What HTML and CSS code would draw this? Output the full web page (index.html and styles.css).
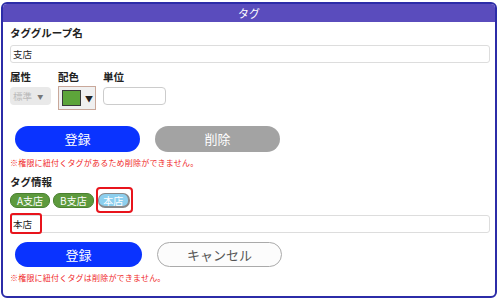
FILE: index.html
```html
<!DOCTYPE html>
<html lang="ja">
<head>
    <meta charset="UTF-8">
    <title>タグ</title>
    <link rel="stylesheet" href="styles.css">
</head>
<body>
    <div class="panel">
        <div class="panel-head">タグ</div>
        <div class="panel-body">
            <div class="label">タググループ名</div>
            <div class="field">支店</div>

            <div class="attr-labels">
                <div class="attr-col attr-kind">属性</div>
                <div class="attr-col attr-color">配色</div>
                <div class="attr-col">単位</div>
            </div>
            <div class="attr-row">
                <div class="select-box">標準 <span class="caret">▼</span></div>
                <div class="color-box">
                    <span class="swatch"></span>
                    <span class="caret dark">▼</span>
                </div>
                <div class="unit-box"></div>
            </div>

            <div class="buttons first">
                <div class="btn btn-blue">登録</div>
                <div class="btn btn-gray">削除</div>
            </div>
            <div class="warn">※権限に紐付くタグがあるため削除ができません。</div>

            <div class="label tag-title">タグ情報</div>
            <div class="tags">
                <span class="tag">A支店</span>
                <span class="tag">B支店</span>
                <span class="tag-mark"><span class="tag tag-active">本店</span></span>
            </div>
            <div class="field-wrap">
                <div class="field">本店</div>
                <span class="text-mark"></span>
            </div>

            <div class="buttons second">
                <div class="btn btn-blue">登録</div>
                <div class="btn btn-white">キャンセル</div>
            </div>
            <div class="warn">※権限に紐付くタグは削除ができません。</div>
        </div>
    </div>
</body>
</html>
```

FILE: styles.css
```css
body {
    margin: 0;
    background-color: #fff;
    font-family: "Noto Sans CJK JP", "Noto Sans", sans-serif;
    color: #222;
}
.panel {
    margin: 2px 0 0 1px;
    width: 496px;
    height: 296px;
    box-sizing: border-box;
    border: 2px solid #2c2ca8;
    border-radius: 6px;
    overflow: hidden;
}
.panel-head {
    height: 18px;
    line-height: 18px;
    background-color: #5a4cbd;
    color: #fff;
    font-size: 11px;
    text-align: center;
}
.panel-body {
    padding: 0 5px 0 7px;
}
.label {
    margin-top: 4px;
    font-size: 10.5px;
    font-weight: bold;
    line-height: 14px;
}
.field {
    margin-top: 5px;
    height: 18px;
    box-sizing: border-box;
    border: 1px solid #ddd;
    border-radius: 3px;
    font-size: 9.5px;
    line-height: 16px;
    padding-left: 2px;
}
.attr-labels {
    display: flex;
    margin-top: 7px;
    font-size: 10.5px;
    font-weight: bold;
    line-height: 14px;
}
.attr-kind {
    width: 48px;
}
.attr-color {
    width: 45px;
}
.attr-row {
    display: flex;
    align-items: flex-start;
    margin-top: 2px;
}
.select-box {
    margin-top: 1px;
    width: 41px;
    height: 18px;
    box-sizing: border-box;
    background-color: #e9e9e9;
    border-radius: 4px;
    color: #bbb;
    font-size: 9.5px;
    line-height: 18px;
    padding-left: 3px;
}
.caret {
    font-size: 6px;
    vertical-align: 1px;
    margin-left: 3px;
    color: #777;
}
.caret.dark {
    color: #222;
    font-size: 8px;
    margin-left: 4px;
}
.color-box {
    margin-left: 7px;
    width: 38px;
    height: 24px;
    box-sizing: border-box;
    border: 1px solid #c9a89a;
    background-color: #f0f0f0;
    display: flex;
    align-items: center;
    padding-left: 3px;
}
.swatch {
    width: 19px;
    height: 16px;
    box-sizing: border-box;
    background-color: #5da53a;
    border: 1px solid #3a3a3a;
}
.unit-box {
    margin-top: 1px;
    margin-left: 7px;
    width: 63px;
    height: 18px;
    box-sizing: border-box;
    border: 1px solid #ccc;
    border-radius: 4px;
}
.buttons {
    display: flex;
    gap: 15px;
    padding-left: 5px;
}
.buttons.first {
    margin-top: 16px;
}
.buttons.second {
    margin-top: 9px;
}
.btn {
    width: 125px;
    height: 26px;
    box-sizing: border-box;
    border-radius: 13px;
    text-align: center;
    font-size: 13px;
    line-height: 26px;
    color: #fff;
}
.buttons.second .btn {
    height: 25px;
    line-height: 25px;
}
.buttons.second .btn-blue {
    width: 127px;
}
.btn-blue {
    background-color: #0a33ff;
}
.btn-gray {
    background-color: #a3a3a3;
}
.btn-white {
    background-color: #fcfcfc;
    border: 1px solid #aaa;
    color: #555;
}
.buttons.second .btn-white {
    line-height: 23px;
}
.warn {
    margin-top: 5px;
    font-size: 8px;
    letter-spacing: 0.2px;
    line-height: 12px;
    color: #f02828;
}
.tag-title {
    margin-top: 6px;
}
.tags {
    display: flex;
    gap: 3px;
    margin-top: 4px;
    height: 14px;
}
.tag {
    display: block;
    height: 15px;
    box-sizing: border-box;
    padding: 0 6px;
    border-radius: 7px;
    background-color: #5d9a3d;
    border: 1px solid #4a8030;
    color: #fff;
    font-size: 10px;
    line-height: 13px;
}
.tag-mark {
    display: flex;
    position: relative;
    margin-left: 1px;
}
.tag-mark::after {
    content: "";
    position: absolute;
    left: -2px;
    top: -6px;
    width: 37px;
    height: 26px;
    box-sizing: border-box;
    border: 2px solid #e8141c;
    border-radius: 4px;
}
.tag-active {
    width: 32px;
    padding: 0;
    text-align: center;
    background-color: #8ccfee;
    border: 1px solid #8a8a8a;
    border-width: 1px 2px 2px 1px;
}
.field-wrap {
    position: relative;
    margin-top: 8px;
}
.field-wrap .field {
    margin-top: 0;
}
.text-mark {
    position: absolute;
    left: 0;
    top: -2px;
    width: 32px;
    height: 21px;
    box-sizing: border-box;
    border: 2px solid #e8141c;
    border-radius: 3px;
}
```
